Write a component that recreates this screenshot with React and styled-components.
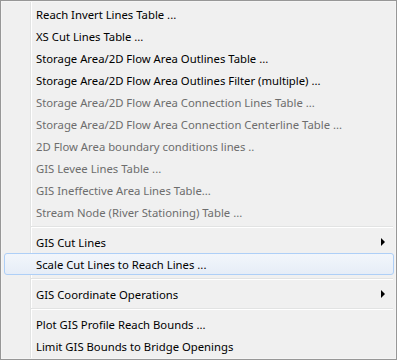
import React from "react";
import styled, { createGlobalStyle } from "styled-components";

const GlobalStyle = createGlobalStyle`
  html, body {
    margin: 0;
    padding: 0;
    background: #ffffff;
  }
`;

const items = [
  { label: "Reach Invert Lines Table ..." },
  { label: "XS Cut Lines Table ..." },
  { label: "Storage Area/2D Flow Area Outlines Table ..." },
  { label: "Storage Area/2D Flow Area Outlines Filter (multiple) ..." },
  { label: "Storage Area/2D Flow Area Connection Lines Table ...", disabled: true },
  { label: "Storage Area/2D Flow Area Connection Centerline Table ...", disabled: true },
  { label: "2D Flow Area boundary conditions lines ..", disabled: true },
  { label: "GIS Levee Lines Table ...", disabled: true },
  { label: "GIS Ineffective Area Lines Table...", disabled: true },
  { label: "Stream Node (River Stationing) Table ...", disabled: true },
  { separator: true },
  { label: "GIS Cut Lines", submenu: true },
  { label: "Scale Cut Lines to Reach Lines ...", active: true },
  { separator: true },
  { label: "GIS Coordinate Operations", submenu: true },
  { separator: true },
  { label: "Plot GIS Profile Reach Bounds ..." },
  { label: "Limit GIS Bounds to Bridge Openings" },
];

export default function App() {
  return (
    <>
      <GlobalStyle />
      <Menu>
        {items.map((item, i) =>
          item.separator ? (
            <Separator key={i} />
          ) : (
            <Item key={i} $active={item.active}>
              <Label $disabled={item.disabled}>{item.label}</Label>
              {item.submenu && <Arrow />}
            </Item>
          )
        )}
      </Menu>
    </>
  );
}

const Menu = styled.div`
  width: 397px;
  height: 360px;
  box-sizing: border-box;
  border: 1px solid #979797;
  padding: 2px 2px 2px 3px;
  display: flex;
  flex-direction: column;
  background-color: #f0f0f0;
  background-image: linear-gradient(
    to right,
    transparent 29px,
    #e2e3e3 29px,
    #e2e3e3 30px,
    #ffffff 30px,
    #ffffff 31px,
    transparent 31px
  );
  box-shadow: inset 0 0 0 1px #f5f5f5;
  font-family: "Noto Sans", "Open Sans", sans-serif;
  font-size: 11.3px;
`;

const Item = styled.div`
  height: 22px;
  box-sizing: border-box;
  display: flex;
  align-items: center;
  padding-left: 31px;
  border: 1px solid ${(p) => (p.$active ? "#aecff7" : "transparent")};
  border-radius: 3px;
  background: ${(p) =>
    p.$active ? "linear-gradient(#f2f6fb, #e6edf7)" : "transparent"};
  cursor: default;
`;

const Label = styled.span`
  color: ${(p) => (p.$disabled ? "#6d6d6d" : "#000000")};
  white-space: nowrap;
`;

const Arrow = styled.span`
  margin-left: auto;
  margin-right: 8px;
  width: 0;
  height: 0;
  border-left: 4px solid #000000;
  border-top: 4px solid transparent;
  border-bottom: 4px solid transparent;
`;

const Separator = styled.div`
  height: 8px;
  box-sizing: border-box;
  margin-left: 27px;
  margin-right: 1px;
  padding-top: 3px;
  &::after {
    content: "";
    display: block;
    height: 1px;
    background: #e2e3e3;
    border-bottom: 1px solid #ffffff;
  }
`;
